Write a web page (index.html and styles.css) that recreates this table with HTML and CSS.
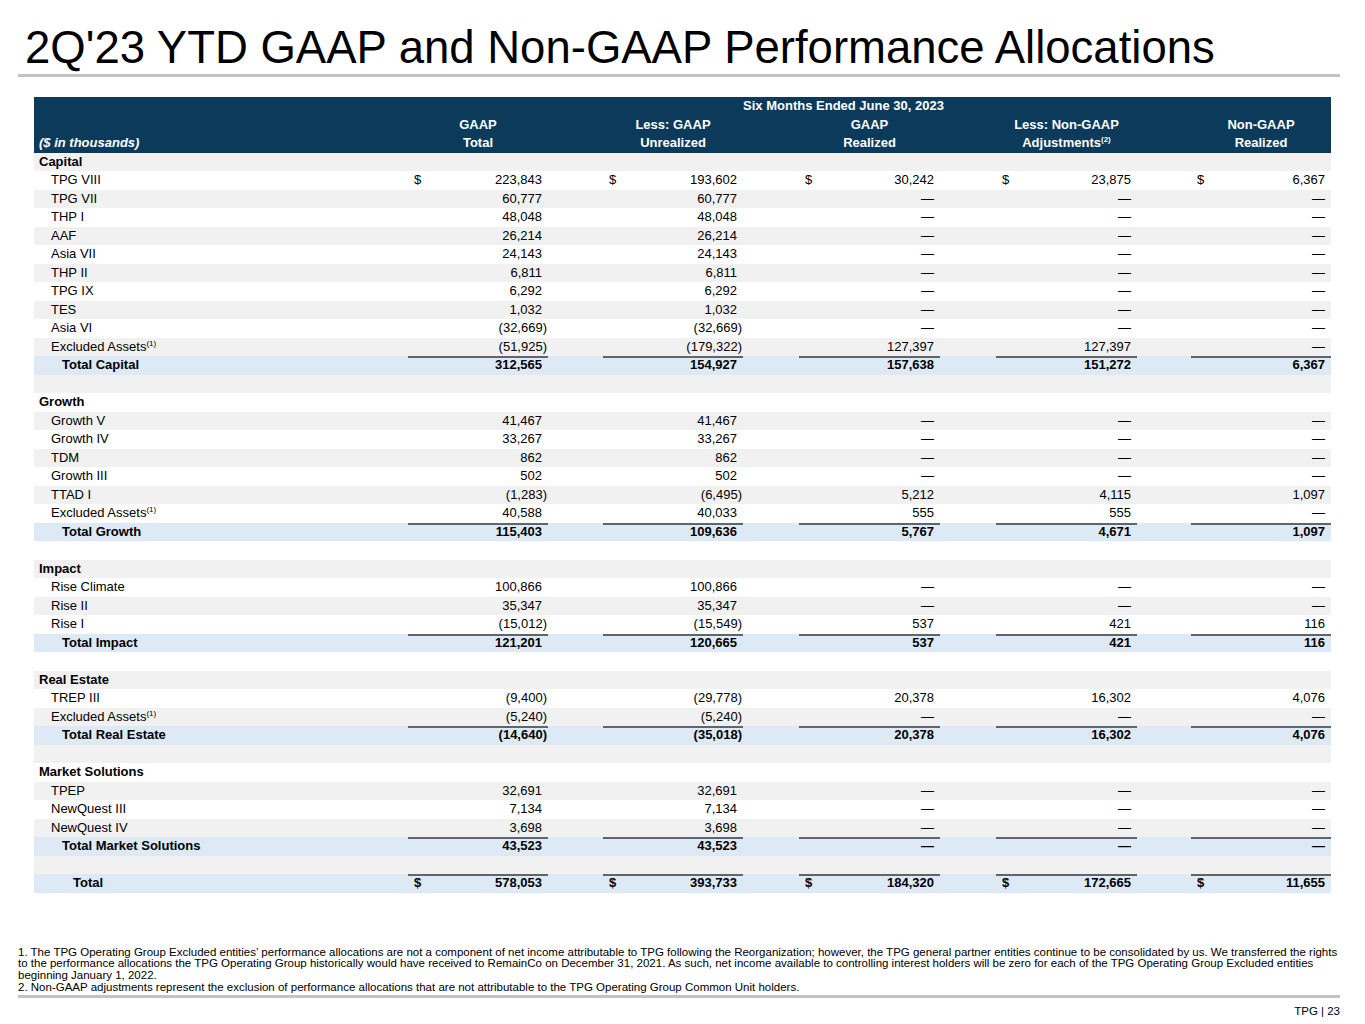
FILE: index.html
```html
<!DOCTYPE html>
<html lang="en">
<head>
<meta charset="utf-8">
<title>2Q'23 YTD GAAP and Non-GAAP Performance Allocations</title>
<link rel="stylesheet" href="styles.css">
</head>
<body>
<div class="slide">
  <h1 class="title">2Q'23 YTD GAAP and Non-GAAP Performance Allocations</h1>
  <div class="rule"></div>

  <table class="alloc">
    <colgroup>
      <col class="c-label"><col class="c-num1"><col class="c-sp1"><col class="c-num2"><col class="c-sp2"><col class="c-num3"><col class="c-sp3"><col class="c-num4"><col class="c-sp4"><col class="c-num5">
    </colgroup>
    <thead>
      <tr><th></th><th colspan="9" class="period">Six Months Ended June 30, 2023</th></tr>
      <tr><th></th><th>GAAP</th><th></th><th>Less: GAAP</th><th></th><th>GAAP</th><th></th><th>Less: Non-GAAP</th><th></th><th>Non-GAAP</th></tr>
      <tr><th class="units">($ in thousands)</th><th>Total</th><th></th><th>Unrealized</th><th></th><th>Realized</th><th></th><th>Adjustments<sup>(2)</sup></th><th></th><th>Realized</th></tr>
    </thead>
    <tbody>
      <tr class="sec"><td class="lbl">Capital</td><td></td><td></td><td></td><td></td><td></td><td></td><td></td><td></td><td></td></tr>
      <tr class="item"><td class="lbl">TPG VIII</td><td class="n"><span class="cur">$</span>223,843</td><td></td><td class="n"><span class="cur">$</span>193,602</td><td></td><td class="n"><span class="cur">$</span>30,242</td><td></td><td class="n"><span class="cur">$</span>23,875</td><td></td><td class="n"><span class="cur">$</span>6,367</td></tr>
      <tr class="item"><td class="lbl">TPG VII</td><td class="n">60,777</td><td></td><td class="n">60,777</td><td></td><td class="n">—</td><td></td><td class="n">—</td><td></td><td class="n">—</td></tr>
      <tr class="item"><td class="lbl">THP I</td><td class="n">48,048</td><td></td><td class="n">48,048</td><td></td><td class="n">—</td><td></td><td class="n">—</td><td></td><td class="n">—</td></tr>
      <tr class="item"><td class="lbl">AAF</td><td class="n">26,214</td><td></td><td class="n">26,214</td><td></td><td class="n">—</td><td></td><td class="n">—</td><td></td><td class="n">—</td></tr>
      <tr class="item"><td class="lbl">Asia VII</td><td class="n">24,143</td><td></td><td class="n">24,143</td><td></td><td class="n">—</td><td></td><td class="n">—</td><td></td><td class="n">—</td></tr>
      <tr class="item"><td class="lbl">THP II</td><td class="n">6,811</td><td></td><td class="n">6,811</td><td></td><td class="n">—</td><td></td><td class="n">—</td><td></td><td class="n">—</td></tr>
      <tr class="item"><td class="lbl">TPG IX</td><td class="n">6,292</td><td></td><td class="n">6,292</td><td></td><td class="n">—</td><td></td><td class="n">—</td><td></td><td class="n">—</td></tr>
      <tr class="item"><td class="lbl">TES</td><td class="n">1,032</td><td></td><td class="n">1,032</td><td></td><td class="n">—</td><td></td><td class="n">—</td><td></td><td class="n">—</td></tr>
      <tr class="item"><td class="lbl">Asia VI</td><td class="n"><span class="neg">(32,669)</span></td><td></td><td class="n"><span class="neg">(32,669)</span></td><td></td><td class="n">—</td><td></td><td class="n">—</td><td></td><td class="n">—</td></tr>
      <tr class="item"><td class="lbl">Excluded Assets<sup>(1)</sup></td><td class="n"><span class="neg">(51,925)</span></td><td></td><td class="n"><span class="neg">(179,322)</span></td><td></td><td class="n">127,397</td><td></td><td class="n">127,397</td><td></td><td class="n">—</td></tr>
      <tr class="tot"><td class="lbl">Total Capital</td><td class="n">312,565</td><td></td><td class="n">154,927</td><td></td><td class="n">157,638</td><td></td><td class="n">151,272</td><td></td><td class="n">6,367</td></tr>
      <tr class="blank"><td></td><td></td><td></td><td></td><td></td><td></td><td></td><td></td><td></td><td></td></tr>

      <tr class="sec"><td class="lbl">Growth</td><td></td><td></td><td></td><td></td><td></td><td></td><td></td><td></td><td></td></tr>
      <tr class="item"><td class="lbl">Growth V</td><td class="n">41,467</td><td></td><td class="n">41,467</td><td></td><td class="n">—</td><td></td><td class="n">—</td><td></td><td class="n">—</td></tr>
      <tr class="item"><td class="lbl">Growth IV</td><td class="n">33,267</td><td></td><td class="n">33,267</td><td></td><td class="n">—</td><td></td><td class="n">—</td><td></td><td class="n">—</td></tr>
      <tr class="item"><td class="lbl">TDM</td><td class="n">862</td><td></td><td class="n">862</td><td></td><td class="n">—</td><td></td><td class="n">—</td><td></td><td class="n">—</td></tr>
      <tr class="item"><td class="lbl">Growth III</td><td class="n">502</td><td></td><td class="n">502</td><td></td><td class="n">—</td><td></td><td class="n">—</td><td></td><td class="n">—</td></tr>
      <tr class="item"><td class="lbl">TTAD I</td><td class="n"><span class="neg">(1,283)</span></td><td></td><td class="n"><span class="neg">(6,495)</span></td><td></td><td class="n">5,212</td><td></td><td class="n">4,115</td><td></td><td class="n">1,097</td></tr>
      <tr class="item"><td class="lbl">Excluded Assets<sup>(1)</sup></td><td class="n">40,588</td><td></td><td class="n">40,033</td><td></td><td class="n">555</td><td></td><td class="n">555</td><td></td><td class="n">—</td></tr>
      <tr class="tot"><td class="lbl">Total Growth</td><td class="n">115,403</td><td></td><td class="n">109,636</td><td></td><td class="n">5,767</td><td></td><td class="n">4,671</td><td></td><td class="n">1,097</td></tr>
      <tr class="blank"><td></td><td></td><td></td><td></td><td></td><td></td><td></td><td></td><td></td><td></td></tr>

      <tr class="sec"><td class="lbl">Impact</td><td></td><td></td><td></td><td></td><td></td><td></td><td></td><td></td><td></td></tr>
      <tr class="item"><td class="lbl">Rise Climate</td><td class="n">100,866</td><td></td><td class="n">100,866</td><td></td><td class="n">—</td><td></td><td class="n">—</td><td></td><td class="n">—</td></tr>
      <tr class="item"><td class="lbl">Rise II</td><td class="n">35,347</td><td></td><td class="n">35,347</td><td></td><td class="n">—</td><td></td><td class="n">—</td><td></td><td class="n">—</td></tr>
      <tr class="item"><td class="lbl">Rise I</td><td class="n"><span class="neg">(15,012)</span></td><td></td><td class="n"><span class="neg">(15,549)</span></td><td></td><td class="n">537</td><td></td><td class="n">421</td><td></td><td class="n">116</td></tr>
      <tr class="tot"><td class="lbl">Total Impact</td><td class="n">121,201</td><td></td><td class="n">120,665</td><td></td><td class="n">537</td><td></td><td class="n">421</td><td></td><td class="n">116</td></tr>
      <tr class="blank"><td></td><td></td><td></td><td></td><td></td><td></td><td></td><td></td><td></td><td></td></tr>

      <tr class="sec"><td class="lbl">Real Estate</td><td></td><td></td><td></td><td></td><td></td><td></td><td></td><td></td><td></td></tr>
      <tr class="item"><td class="lbl">TREP III</td><td class="n"><span class="neg">(9,400)</span></td><td></td><td class="n"><span class="neg">(29,778)</span></td><td></td><td class="n">20,378</td><td></td><td class="n">16,302</td><td></td><td class="n">4,076</td></tr>
      <tr class="item"><td class="lbl">Excluded Assets<sup>(1)</sup></td><td class="n"><span class="neg">(5,240)</span></td><td></td><td class="n"><span class="neg">(5,240)</span></td><td></td><td class="n">—</td><td></td><td class="n">—</td><td></td><td class="n">—</td></tr>
      <tr class="tot"><td class="lbl">Total Real Estate</td><td class="n"><span class="neg">(14,640)</span></td><td></td><td class="n"><span class="neg">(35,018)</span></td><td></td><td class="n">20,378</td><td></td><td class="n">16,302</td><td></td><td class="n">4,076</td></tr>
      <tr class="blank"><td></td><td></td><td></td><td></td><td></td><td></td><td></td><td></td><td></td><td></td></tr>

      <tr class="sec"><td class="lbl">Market Solutions</td><td></td><td></td><td></td><td></td><td></td><td></td><td></td><td></td><td></td></tr>
      <tr class="item"><td class="lbl">TPEP</td><td class="n">32,691</td><td></td><td class="n">32,691</td><td></td><td class="n">—</td><td></td><td class="n">—</td><td></td><td class="n">—</td></tr>
      <tr class="item"><td class="lbl">NewQuest III</td><td class="n">7,134</td><td></td><td class="n">7,134</td><td></td><td class="n">—</td><td></td><td class="n">—</td><td></td><td class="n">—</td></tr>
      <tr class="item"><td class="lbl">NewQuest IV</td><td class="n">3,698</td><td></td><td class="n">3,698</td><td></td><td class="n">—</td><td></td><td class="n">—</td><td></td><td class="n">—</td></tr>
      <tr class="tot"><td class="lbl">Total Market Solutions</td><td class="n">43,523</td><td></td><td class="n">43,523</td><td></td><td class="n">—</td><td></td><td class="n">—</td><td></td><td class="n">—</td></tr>
      <tr class="blank"><td></td><td></td><td></td><td></td><td></td><td></td><td></td><td></td><td></td><td></td></tr>

      <tr class="tot grand"><td class="lbl">Total</td><td class="n"><span class="cur">$</span>578,053</td><td></td><td class="n"><span class="cur">$</span>393,733</td><td></td><td class="n"><span class="cur">$</span>184,320</td><td></td><td class="n"><span class="cur">$</span>172,665</td><td></td><td class="n"><span class="cur">$</span>11,655</td></tr>
    </tbody>
  </table>

  <div class="notes">
    <p>1. The TPG Operating Group Excluded entities’ performance allocations are not a component of net income attributable to TPG following the Reorganization; however, the TPG general partner entities continue to be consolidated by us. We transferred the rights to the performance allocations the TPG Operating Group historically would have received to RemainCo on December 31, 2021. As such, net income available to controlling interest holders will be zero for each of the TPG Operating Group Excluded entities beginning January 1, 2022.</p>
    <p>2. Non-GAAP adjustments represent the exclusion of performance allocations that are not attributable to the TPG Operating Group Common Unit holders.</p>
  </div>
  <div class="rule rule-bottom"></div>
  <div class="pageno">TPG | 23</div>
</div>
</body>
</html>
```

FILE: styles.css
```css
html, body {
  margin: 0;
  padding: 0;
  background: #ffffff;
}

body {
  font-family: "Liberation Sans", Arial, sans-serif;
  color: #000000;
}

.slide {
  width: 1365px;
  height: 1024px;
  position: relative;
  overflow: hidden;
}

.title {
  margin: 0;
  padding: 22px 0 0 25px;
  font-size: 45.5px;
  line-height: 52px;
  font-weight: normal;
  color: #000000;
  letter-spacing: 0;
  white-space: nowrap;
}

.rule {
  margin: 0 25px 0 18px;
  height: 3px;
  background: #c3c3c3;
}

/* ---------- table ---------- */
.alloc {
  margin: 20px 0 0 34px;
  width: 1297px;
  table-layout: fixed;
  border-collapse: collapse;
  border-spacing: 0;
  font-size: 13px;
}

.c-label { width: 374px; }
.c-num1 { width: 140px; }
.c-sp1 { width: 55px; }
.c-num2 { width: 140px; }
.c-sp2 { width: 56px; }
.c-num3 { width: 141px; }
.c-sp3 { width: 56px; }
.c-num4 { width: 141px; }
.c-sp4 { width: 54px; }
.c-num5 { width: 140px; }

.alloc th,
.alloc td {
  padding: 0;
  height: 18.5px;
  line-height: 18.5px;
  white-space: nowrap;
  vertical-align: middle;
}

.alloc thead tr {
  background: #0c3a5b;
}

.alloc th {
  color: #ffffff;
  font-weight: bold;
  text-align: center;
}

.alloc th.period {
  padding-right: 52px;
}

.alloc th.units {
  text-align: left;
  font-style: italic;
  padding-left: 5px;
}

.alloc sup {
  font-size: 8px;
  line-height: 0;
  vertical-align: 5px;
}

.alloc tbody tr:nth-child(odd) {
  background: #f1f1f1;
}

.alloc tbody tr:nth-child(even) {
  background: #ffffff;
}

.alloc tbody tr.tot {
  background: #dde9f5;
}

.alloc td.lbl {
  padding-left: 17px;
}

.alloc tr.sec td.lbl {
  padding-left: 5px;
  font-weight: bold;
}

.alloc tr.tot td {
  font-weight: bold;
}

.alloc tr.tot td.lbl {
  padding-left: 28px;
}

.alloc tr.grand td.lbl {
  padding-left: 39px;
}

.alloc td.n {
  text-align: right;
  padding-right: 6px;
  padding-left: 6px;
}

.alloc tr.tot td.n {
  box-shadow: inset 0 2px 0 #5d666f;
}

.cur {
  float: left;
}

.neg {
  margin-right: -5px;
}

/* ---------- footnotes ---------- */
.notes {
  margin: 54px 20px 0 18px;
  font-size: 11.5px;
  line-height: 11.7px;
}

.notes p {
  margin: 0;
}

.rule-bottom {
  margin-top: 2px;
}

.pageno {
  margin: 7px 25px 0 0;
  text-align: right;
  font-size: 11.5px;
  line-height: 12px;
}
```
